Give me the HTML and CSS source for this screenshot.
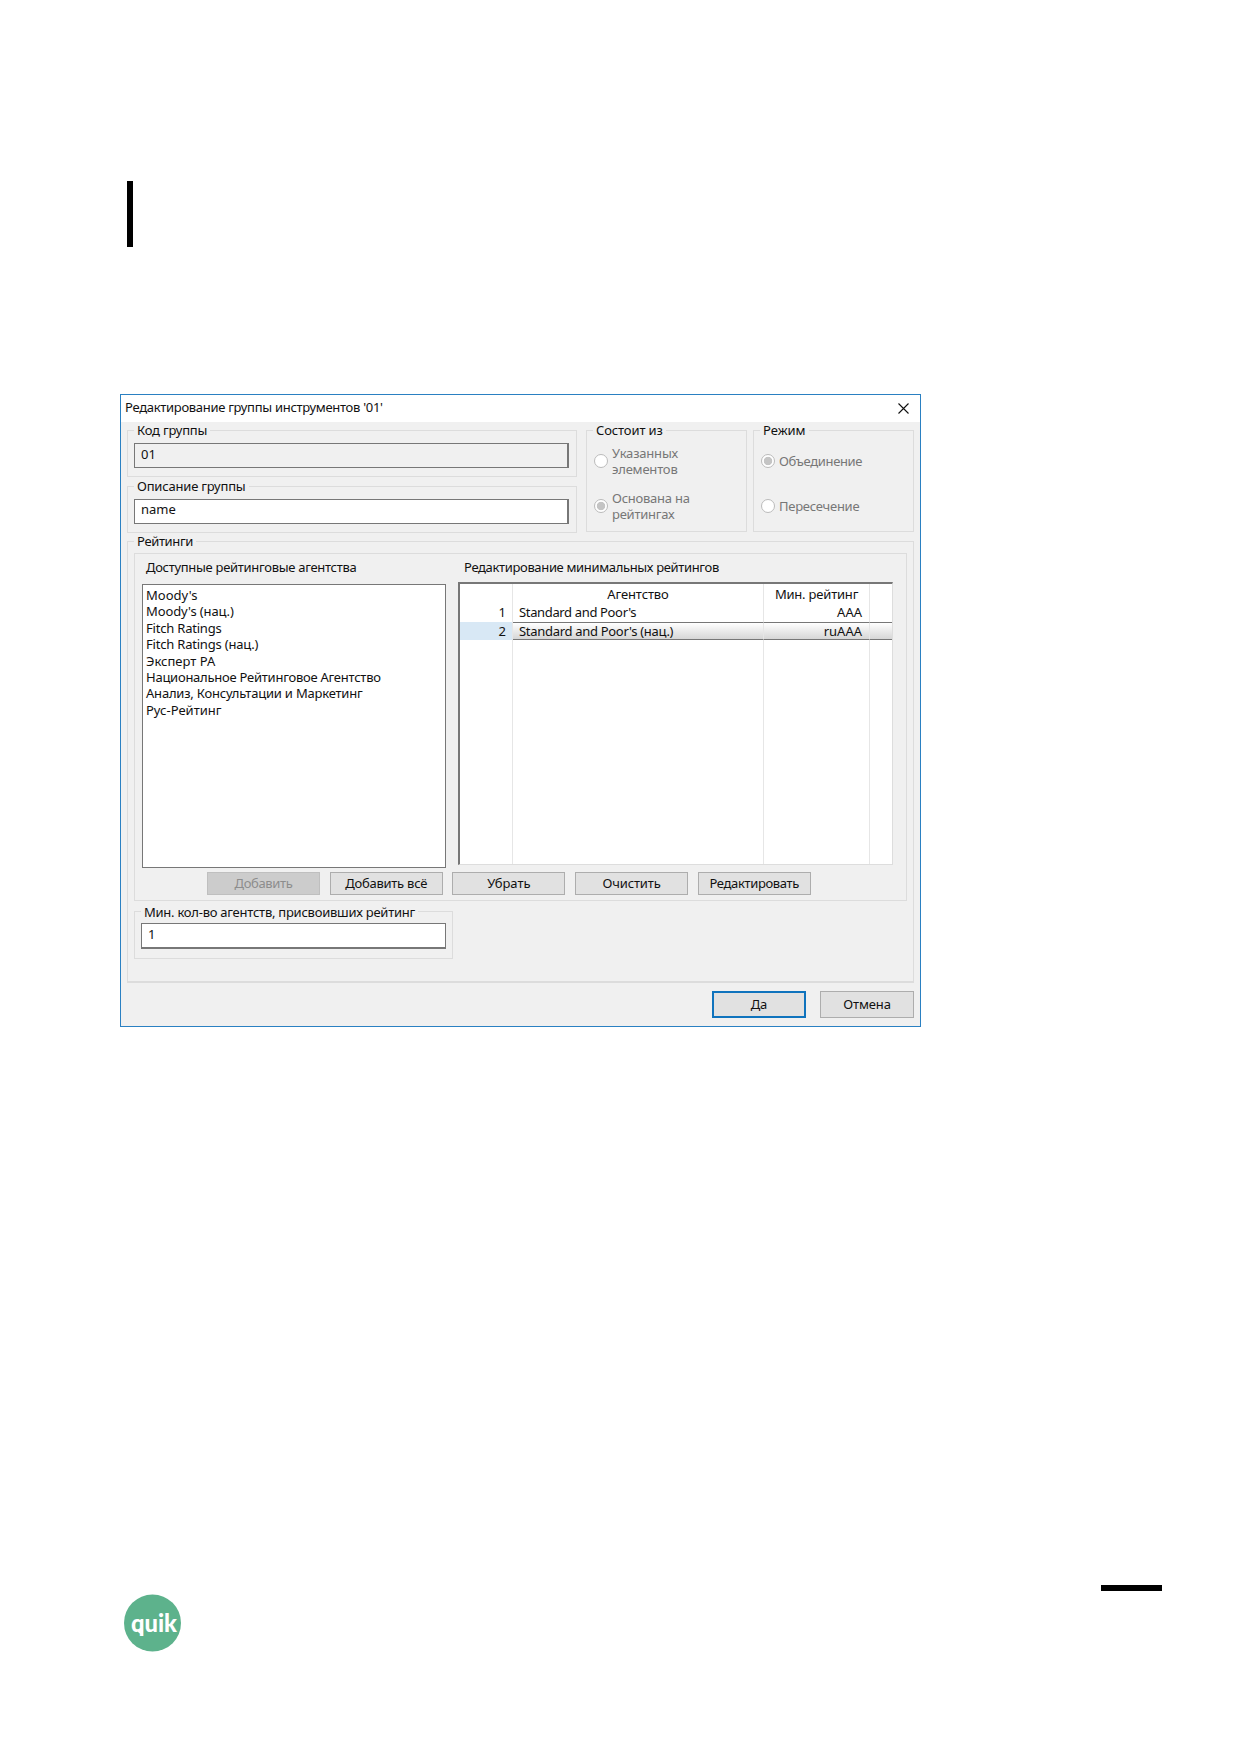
FILE: index.html
```html
<!DOCTYPE html>
<html lang="ru">
<head>
<meta charset="utf-8">
<title>Редактирование группы инструментов</title>
<link rel="stylesheet" href="styles.css">
</head>
<body>
<main class="page">
  <div class="change-bar"></div>
  <section class="window">
    <header class="titlebar">
      <span class="title">Редактирование группы инструментов '01'</span>
      <svg class="close" width="11" height="11" viewBox="0 0 11 11"><path d="M.5 .5L10.5 10.5M10.5 .5L.5 10.5" stroke="#111" stroke-width="1.1" fill="none"/></svg>
    </header>
    <div class="content">
      <div class="top-row">
        <div class="fields">
          <div class="group code"><div class="legend close-set">Код группы</div><div class="input readonly">01</div></div>
          <div class="group desc"><div class="legend close-set">Описание группы</div><div class="input">name</div></div>
        </div>
        <div class="group consists"><div class="legend slight">Состоит из</div>
          <div class="option"><i class="radio"></i><div class="label close-set">Указанных<br>элементов</div></div>
          <div class="option"><i class="radio checked"></i><div class="label snug">Основана на<br>рейтингах</div></div>
        </div>
        <div class="group mode"><div class="legend">Режим</div>
          <div class="option"><i class="radio checked"></i><div class="label tight">Объединение</div></div>
          <div class="option"><i class="radio"></i><div class="label snug">Пересечение</div></div>
        </div>
      </div>
      <div class="group ratings"><div class="legend tight">Рейтинги</div>
        <div class="panel">
          <div class="columns">
            <div class="available">
              <div class="heading title">Доступные рейтинговые агентства</div>
              <ul class="list">
                <li>Moody's</li>
                <li class="slight">Moody's (нац.)</li>
                <li class="close-set">Fitch Ratings</li>
                <li class="close-set">Fitch Ratings (нац.)</li>
                <li>Эксперт РА</li>
                <li class="snug">Национальное Рейтинговое Агентство</li>
                <li class="close-set">Анализ, Консультации и Маркетинг</li>
                <li>Рус-Рейтинг</li>
              </ul>
            </div>
            <div class="minimum">
              <div class="heading tight">Редактирование минимальных рейтингов</div>
              <div class="grid">
                <div class="row head"><div></div><div class="slight">Агентство</div><div class="close-set">Мин. рейтинг</div><div></div></div>
                <div class="row"><div>1</div><div class="tight">Standard and Poor's</div><div>AAA</div><div></div></div>
                <div class="row selected"><div>2</div><div class="title">Standard and Poor's (нац.)</div><div>ruAAA</div><div></div></div>
                <div class="row rest"><div></div><div></div><div></div><div></div></div>
              </div>
            </div>
          </div>
          <div class="actions">
            <div class="button disabled tight">Добавить</div>
            <div class="button snug">Добавить всё</div>
            <div class="button">Убрать</div>
            <div class="button slight">Очистить</div>
            <div class="button tight">Редактировать</div>
          </div>
        </div>
        <div class="group count"><div class="legend snug">Мин. кол-во агентств, присвоивших рейтинг</div><div class="input">1</div></div>
      </div>
      <div class="footer">
        <div class="button primary">Да</div>
        <div class="button slight">Отмена</div>
      </div>
    </div>
  </section>
  <footer class="page-footer">
    <svg class="logo" width="58" height="58" viewBox="0 0 58 58">
      <circle cx="28.5" cy="29" r="28.5" fill="#5db28c"/>
      <text x="7" y="37.5" class="logo-text" textLength="46" lengthAdjust="spacingAndGlyphs">quik</text>
      <path d="M14 36L19 36L19 42L14 38Z" fill="#fff"/>
    </svg>
    <div class="page-rule"></div>
  </footer>
</main>
</body>
</html>
```
FILE: styles.css
```css
* { box-sizing: border-box; }
body { margin: 0; background: #fff; }
.page { width: 1240px; height: 1754px; padding: 181px 0 0 120px; font: 13px/16px "Noto Sans", "Open Sans", sans-serif; color: #111; white-space: nowrap; overflow: hidden; }
.slight { letter-spacing: -.13px; }
.close-set { letter-spacing: -.2px; }
.snug { letter-spacing: -.25px; }
.title { letter-spacing: -.3px; }
.tight { letter-spacing: -.35px; }
.change-bar { width: 6px; height: 66px; margin-left: 7px; background: #000; }
.window { width: 801px; height: 633px; margin-top: 147px; border: 1px solid #2a80c2; background: #f0f0f0; }
.titlebar { display: flex; justify-content: space-between; align-items: center; height: 27px; padding: 0 11px 1px 4px; background: #fff; }
.titlebar .title { padding-bottom: 2px; }
.content { padding: 8px 6px 0; }
.group { border: 1px solid #dcdcdc; }
.legend { width: max-content; height: 16px; margin: -9px 0 0 6px; padding: 0 3px; background: #f0f0f0; }
.top-row { display: flex; }
.fields { width: 450px; margin-right: 9px; }
.code { height: 47px; }
.desc { height: 47px; margin-top: 9px; }
.input { height: 25px; margin: 5px 7px 0 6px; padding: 2px 6px; border: 1px solid #777; border-right-width: 2px; background: #fff; }
.desc .input { padding-top: 1px; }
.readonly { background: #f0f0f0; }
.consists { width: 161px; height: 102px; margin-right: 6px; }
.mode { width: 161px; height: 102px; }
.option { display: flex; align-items: center; height: 45px; padding-left: 7px; color: #777; }
.label { padding-top: 1px; line-height: 16.5px; }
.radio { width: 14px; height: 14px; margin-right: 4px; border: 1px solid #bbb; border-radius: 50%; background: #fff; }
.checked { background: radial-gradient(circle, #c4c4c4 0 3.8px, #fff 4.6px); }
.ratings { height: 442px; margin-top: 8px; border-bottom-width: 2px; }
.panel { width: 773px; height: 348px; margin: 4px 0 0 6px; border: 1px solid #dcdcdc; }
.columns { display: flex; height: 315px; padding-left: 7px; }
.available { width: 304px; }
.heading { padding: 5px 0 0 4px; }
.list { height: 284px; margin: 9px 0 0; padding: 2px 3px; border: 1px solid #777; background: #fff; list-style: none; line-height: 16.4px; }
.minimum { width: 435px; margin-left: 12px; }
.minimum .heading { padding-left: 6px; }
.grid { display: flex; flex-direction: column; height: 283px; margin-top: 7px; border: solid #777; border-width: 2px 0 0 2px; border-bottom: 1px solid #ddd; border-right: 1px solid #ddd; background: #fff; }
.row { display: grid; grid-template-columns: 53px 251px 106px 1fr; height: 19px; line-height: 18px; }
.row > div { border-right: 1px solid #e6e6e6; }
.row > div:last-child { border-right: 0; }
.row > div:first-child { padding-right: 6px; text-align: right; }
.row > div:nth-child(2) { padding-left: 6px; }
.row > div:nth-child(3) { padding-right: 7px; text-align: right; }
.row.head { line-height: 21px; }
.row.head > div:nth-child(2), .row.head > div:nth-child(3) { padding: 0; text-align: center; }
.row.selected { height: 18px; }
.selected > div { border-top: 1px solid #777; border-bottom: 1px solid #777; background: linear-gradient(#fff, #d6d6d6); line-height: 16px; }
.selected > div:first-child { border-top: 0; border-bottom: 0; background: #d8e8f5; line-height: 18px; }
.row.rest { flex: 1; }
.actions { display: flex; gap: 9.7px; margin: 3px 0 0 72px; }
.button { display: flex; align-items: center; justify-content: center; width: 113px; height: 23px; padding-bottom: 1px; border: 1px solid #adadad; background: #e1e1e1; }
.disabled { border-color: #bfbfbf; background: #ccc; color: #8d8d8d; }
.count { width: 319px; height: 48px; margin: 10px 0 0 6px; }
.count .legend { height: 17px; padding-top: 1px; }
.count .input { height: 26px; margin: 3px 6px 0; border-width: 1px 1px 2px 1px; }
.footer { display: flex; justify-content: flex-end; gap: 14px; margin-top: 8px; }
.footer .button { width: 94px; height: 27px; padding-bottom: 2px; }
.footer .primary { border: 2px solid #0f73bd; }
.page-footer { display: flex; justify-content: space-between; margin: 558px 78px 0 4px; }
.page-rule { width: 61px; height: 6px; background: #000; }
.logo { margin-top: 9px; }
.logo-text { font: 900 24.5px Lato, "Open Sans", sans-serif; fill: #fff; }
```
